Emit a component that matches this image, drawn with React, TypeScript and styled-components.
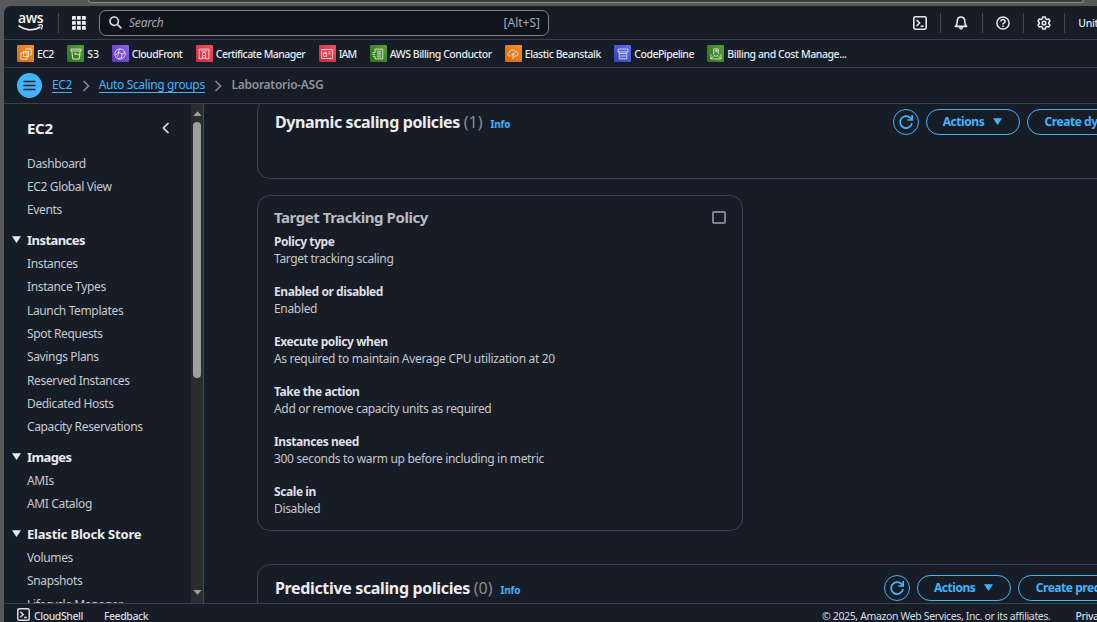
import React from 'react';
import styled, { createGlobalStyle, css } from 'styled-components';

const line = '#39424e';
const bg = '#161d26';
const blue = '#42b4ff';

const Global = createGlobalStyle`
  * { box-sizing: border-box; }
  body { margin: 0; background: #58585b; overflow: hidden; }
  body, button, input { font-family: 'Noto Sans', 'Open Sans', sans-serif; }
  svg { display: block; flex: none; }
`;

const Desktop = styled.div`
  height: 622px;
  display: flex;
  flex-direction: column;
  background: #58585b;
  overflow: hidden;
`;

const BrowserEdge = styled.div`
  height: 6px;
  flex: none;
  padding: 0 13px 0 88px;
`;

const AddressBar = styled.div`
  height: 3px;
  background: #3c3c3f;
  border: 1px solid #8b8b8d;
  border-top: 0;
  border-radius: 0 0 8px 8px;
`;

const Window = styled.div`
  flex: 1;
  min-height: 0;
  margin-left: 4px;
  display: flex;
  flex-direction: column;
  background: ${bg};
  border-top-left-radius: 7px;
  overflow: hidden;
  color: #c6c6cd;
  font-size: 12px;
`;

const TopNav = styled.header`
  height: 34px;
  flex: none;
  display: flex;
  align-items: center;
  padding-left: 13px;
  border-bottom: 1px solid ${line};
`;

const NavDivider = styled.div`
  width: 1px;
  height: 20px;
  background: #424650;
  margin: 0 13px 0 14px;
`;

const SearchBox = styled.label`
  width: 450px;
  height: 26px;
  margin-left: 13px;
  padding: 0 8px 0 9px;
  display: flex;
  align-items: center;
  border: 1.5px solid #7d828c;
  border-radius: 7px;
  background: #0f141a;
  color: #a4a9b3;
`;

const SearchInput = styled.input`
  flex: 1;
  min-width: 0;
  margin-left: 7px;
  padding: 0;
  border: 0;
  outline: 0;
  background: transparent;
  font-size: 12px;
  font-style: italic;
  letter-spacing: -0.2px;
  &::placeholder { color: #a4a9b3; opacity: 1; }
`;

const Shortcut = styled.span`
  font-size: 12px;
  letter-spacing: 0;
`;

const NavTools = styled.div`
  margin-left: auto;
  width: 197px;
  display: flex;
  align-items: center;
  color: #e6e8ec;
  overflow: hidden;
`;

const NavTool = styled.div`
  width: 41.3px;
  height: 20px;
  flex: none;
  display: flex;
  align-items: center;
  justify-content: center;
  border-right: 1px solid #424650;
`;

const Region = styled.span`
  margin-left: 13px;
  font-size: 10.5px;
  font-weight: 500;
  white-space: nowrap;
  letter-spacing: -0.3px;
`;

const Favorites = styled.nav`
  height: 28px;
  flex: none;
  display: flex;
  align-items: center;
  gap: 13px;
  padding-left: 13px;
  border-bottom: 1px solid ${line};
`;

const Favorite = styled.a`
  display: flex;
  align-items: center;
  gap: 3px;
  color: #e8eaee;
`;

const FavoriteName = styled.span<{ $width: number; $track: number }>`
  width: ${p => p.$width}px;
  letter-spacing: ${p => p.$track}px;
  font-size: 10.5px;
  font-weight: 500;
  line-height: 16px;
  white-space: nowrap;
`;

const ServiceTile = styled.span<{ $color: string }>`
  width: 17px;
  height: 17px;
  display: flex;
  align-items: center;
  justify-content: center;
  border-radius: 1px;
  background: ${p => p.$color};
  color: #fff;
`;

const Crumbs = styled.nav`
  height: 36px;
  flex: none;
  display: flex;
  align-items: center;
  padding-left: 13px;
  border-bottom: 1px solid ${line};
  color: #7f8692;
`;

const MenuButton = styled.button`
  width: 25px;
  height: 25px;
  margin-right: 10px;
  padding: 0;
  display: flex;
  align-items: center;
  justify-content: center;
  border: 0;
  border-radius: 50%;
  background: ${blue};
  color: #161d26;
`;

const CrumbLink = styled.a`
  color: ${blue};
  line-height: 14px;
  margin-bottom: 1px;
  border-bottom: 1px solid ${blue};
  letter-spacing: -0.36px;
  white-space: nowrap;
`;

const CrumbCurrent = styled.span`
  color: #8c939f;
  font-weight: 600;
  line-height: 16px;
  margin-bottom: 2px;
  letter-spacing: -0.27px;
`;

const CrumbArrow = styled.svg`
  margin: 0 9px 0 9.7px;
`;

const Body = styled.div`
  flex: 1;
  min-height: 0;
  display: flex;
`;

const Sidebar = styled.aside`
  width: 187px;
  flex: none;
  overflow: hidden;
`;

const SidebarTitle = styled.div`
  height: 47.5px;
  padding: 0 21px 0 23px;
  display: flex;
  align-items: center;
  justify-content: space-between;
  color: #f3f3f7;
  font-size: 15px;
  font-weight: 700;
  letter-spacing: -0.3px;
`;

const NavGroup = styled.div`
  padding-bottom: 6.5px;
`;

const NavItem = styled.a`
  display: block;
  height: 23.35px;
  line-height: 23.35px;
  padding-left: 23px;
  color: #c6c9d0;
  letter-spacing: -0.36px;
  white-space: nowrap;
`;

const NavHeading = styled.div<{ $track: number }>`
  height: 23.8px;
  display: flex;
  align-items: center;
  gap: 6px;
  padding-left: 8px;
  color: #e9ebf0;
  font-size: 13px;
  font-weight: 700;
  letter-spacing: ${p => p.$track}px;
`;

const Scrollbar = styled.div`
  width: 13px;
  flex: none;
  display: flex;
  flex-direction: column;
  align-items: center;
  padding: 7px 0 8px;
  background: #2c2c2c;
  border-right: 1px solid #45484d;
  color: #9f9f9f;
`;

const Thumb = styled.div`
  width: 8px;
  height: 256px;
  margin-top: 6px;
  margin-bottom: auto;
  border-radius: 4px;
  background: #9f9f9f;
`;

const Main = styled.main`
  flex: 1;
  min-width: 0;
  padding-left: 53px;
  overflow: hidden;
`;

const Section = styled.section<{ $scrolled?: boolean }>`
  width: 960px;
  height: 81px;
  padding: 10px 0 0 17px;
  border: 1px solid ${line};
  border-radius: 13px;
  ${p => p.$scrolled && css`margin-top: -6px;`}
`;

const SectionHeader = styled.div`
  width: 822px;
  height: 26px;
  display: flex;
  align-items: center;
  overflow: hidden;
`;

const SectionTitle = styled.h2<{ $track: number }>`
  margin: 0 0 1px;
  color: #ebebf0;
  font-size: 16px;
  font-weight: 700;
  line-height: 24px;
  letter-spacing: ${p => p.$track}px;
  white-space: nowrap;
`;

const Count = styled.span`
  color: #8c8c94;
  font-weight: 400;
  letter-spacing: 0;
`;

const Info = styled.a`
  margin: 4px 0 0 8px;
  color: ${blue};
  font-size: 10px;
  font-weight: 700;
  letter-spacing: -0.2px;
`;

const ButtonRow = styled.div<{ $width: number }>`
  width: ${p => p.$width}px;
  margin-left: auto;
  display: flex;
  gap: 7px;
`;

const OutlineButton = styled.button<{ $round?: boolean }>`
  flex: none;
  width: ${p => (p.$round ? 26 : 94)}px;
  height: 26px;
  padding: 0 0 1px;
  display: flex;
  align-items: center;
  justify-content: center;
  gap: 9px;
  border: 1.5px solid ${blue};
  border-radius: 13px;
  background: transparent;
  color: ${blue};
  font-size: 12px;
  font-weight: 700;
  letter-spacing: -0.45px;
  white-space: nowrap;
`;

const CreateButton = styled(OutlineButton)`
  width: 210px;
  justify-content: flex-start;
  padding-left: 17px;
`;

const PolicyCard = styled.article`
  width: 486px;
  height: 336px;
  margin: 16px 0 33px;
  padding: 11px 16px 0;
  border: 1px solid ${line};
  border-radius: 13px;
`;

const PolicyHeader = styled.div`
  height: 20px;
  display: flex;
  align-items: center;
  justify-content: space-between;
`;

const PolicyName = styled.h3`
  margin: 0;
  color: #b9bbc2;
  font-size: 15px;
  font-weight: 700;
  letter-spacing: -0.45px;
`;

const Checkbox = styled.span`
  width: 14px;
  height: 13px;
  border: 2px solid #7d838e;
  border-radius: 2px;
`;

const Field = styled.dl`
  margin: 0;
  padding-top: 6px;
  height: 50px;
  line-height: 17px;
`;

const Term = styled.dt`
  color: #dedfe6;
  font-weight: 700;
  letter-spacing: -0.42px;
`;

const Value = styled.dd`
  margin: 0;
  letter-spacing: -0.33px;
`;

const Footer = styled.footer`
  height: 19px;
  flex: none;
  display: flex;
  padding: 4px 0 0 13px;
  border-top: 1px solid ${line};
  color: #dadce2;
  font-size: 10.5px;
  font-weight: 500;
  line-height: 16px;
  letter-spacing: -0.42px;
  white-space: nowrap;
  overflow: hidden;
`;

const FooterLink = styled.a<{ $indent: number }>`
  margin-left: ${p => p.$indent}px;
`;

const Copyright = styled.span`
  margin-left: auto;
  width: 253.5px;
  flex: none;
  font-weight: 400;
  letter-spacing: -0.36px;
`;

const Privacy = styled.a`
  width: 21.5px;
  flex: none;
`;

const Caret = () => (
  <svg width="9" height="7" viewBox="0 0 9 7"><path d="M0 .3h9L4.5 7z" fill="currentColor" /></svg>
);

const Refresh = () => (
  <svg width="16" height="16" viewBox="0 0 16 16" fill="none" stroke="currentColor" strokeWidth="1.7">
    <path d="M14 9.2A6 6 0 1 1 12.4 3.9L14 5.6" /><path d="M14.2 1v5H9.4" />
  </svg>
);

const Terminal = ({ size = 14 }: { size?: number }) => (
  <svg width={size} height={size} viewBox="0 0 14 14" fill="none" stroke="currentColor" strokeWidth="1.6">
    <rect x=".8" y=".8" width="12.4" height="12.4" rx="1.6" /><path d="M3.6 4l3 3-3 3M7.6 10.2h3" />
  </svg>
);

const AwsMark = styled.span`
  width: 27px;
  height: 18px;
  flex: none;
  display: flex;
  flex-direction: column;
  align-items: center;
  color: #f4f5f7;
`;

const AwsName = styled.span`
  height: 10px;
  font-family: 'Open Sans', sans-serif;
  font-size: 14px;
  font-weight: 600;
  line-height: 8px;
  letter-spacing: -0.4px;
`;

const tiles = {
  orange: 'linear-gradient(45deg, #d06a12, #f4922a)',
  green: 'linear-gradient(45deg, #2a701f, #57a035)',
  purple: 'linear-gradient(45deg, #5a36b8, #9160ea)',
  red: 'linear-gradient(45deg, #c8293c, #f0515c)',
  indigo: 'linear-gradient(45deg, #3541b8, #5c6ff0)',
};

const favorites = [
  { name: 'EC2', width: 17.3, track: -0.6, color: tiles.orange, art: <><rect x="1" y="5.2" width="6.6" height="6.8" /><rect x="3.8" y="3.8" width="5.6" height="5.4" /><path d="M6 2V1h6.2v6.4H10.8" /></> },
  { name: 'S3', width: 11.5, track: -0.1, color: tiles.green, art: <><path d="M1 1.2h11v2H1zM2 3.4l1 8.6h7l1-8.6M5.8 6.2l5.6 1.6" /><circle cx="5.6" cy="6.3" r=".5" /></> },
  { name: 'CloudFront', width: 51, track: -0.53, color: tiles.purple, art: <><circle cx="6.5" cy="6.5" r="5.6" /><path d="M1.4 7.5L5 4.6l3.6 1.8M5 4.6L5.6 1M8.6 6.4L11.8 5M4.5 11.6l4-1.4V6.4M5 4.6l-1 5" /></> },
  { name: 'Certificate Manager', width: 90, track: -0.55, color: tiles.red, art: <><path d="M3.4 11.8H1.2V1.2h10.6v10.6H9.6M3 3.2h7" /><circle cx="6.5" cy="6.6" r="1.9" /><path d="M5.2 8.2L4 11.8l2.5-1 2.5 1-1.2-3.6" /></> },
  { name: 'IAM', width: 18, track: -0.9, color: tiles.red, art: <><rect x=".8" y="1.8" width="11.4" height="9.4" /><path d="M2.8 6h3.4v3H2.8zM3.4 6V4.6h2.2V6M8 4.4h2.4M8 6.4h2" /></> },
  { name: 'AWS Billing Conductor', width: 102, track: -0.46, color: tiles.green, art: <><path d="M3.4 5V1.2h8.2v10.6H3.4V9M5.4 3.6h4.4M5.4 5.6h4.4M5.4 7.6h4.4M5.4 9.6h4.4M.6 5h2.6M.6 7h2.6M1.2 9h2" /></> },
  { name: 'Elastic Beanstalk', width: 76.5, track: -0.46, color: tiles.orange, art: <><path d="M4.4 8.6H2.6C.4 8.2.5 5.2 2.6 5c0-3.4 5.2-4 6.2-1 3.4-.4 4 4 1.4 4.6H8.6M6.5 12V5M6.5 8.4L4.6 6.6M6.5 7.4L8.6 5.6M6.5 10.6l2-1.8" /></> },
  { name: 'CodePipeline', width: 60, track: -0.5, color: tiles.indigo, art: <><path d="M1.2 1.2h10.6v3H1.2zM2.4 4.4v7.4h8.2V4.4M3 6h7M5 7.6L3.9 8.8 5 10M8 7.6l1.1 1.2L8 10M6.9 7.4L6.1 10.2" /></> },
  { name: 'Billing and Cost Manage...', width: 121, track: -0.42, color: tiles.green, art: <><path d="M4 7V1h5v6M5.4 4.8l2-2M5.8 2.6h1.8v1.8M1 6.6v5.2h11V6.6M1 11.6l3.4-3.4L6.5 9l2.1-.8 3.4 3.4" /></> },
];

const groups: { heading?: string; track?: number; items: string[] }[] = [
  { items: ['Dashboard', 'EC2 Global View', 'Events'] },
  { heading: 'Instances', track: -0.55, items: ['Instances', 'Instance Types', 'Launch Templates', 'Spot Requests', 'Savings Plans', 'Reserved Instances', 'Dedicated Hosts', 'Capacity Reservations'] },
  { heading: 'Images', track: -0.6, items: ['AMIs', 'AMI Catalog'] },
  { heading: 'Elastic Block Store', track: -0.2, items: ['Volumes', 'Snapshots', 'Lifecycle Manager'] },
];

const fields = [
  ['Policy type', 'Target tracking scaling'],
  ['Enabled or disabled', 'Enabled'],
  ['Execute policy when', 'As required to maintain Average CPU utilization at 20'],
  ['Take the action', 'Add or remove capacity units as required'],
  ['Instances need', '300 seconds to warm up before including in metric'],
  ['Scale in', 'Disabled'],
];

const Arrow = () => (
  <CrumbArrow width="8" height="12" viewBox="0 0 8 12" fill="none" stroke="currentColor" strokeWidth="1.7"><path d="M1.5 1l5 5-5 5" /></CrumbArrow>
);

function PolicySection({ title, count, create, track, actionsWidth, scrolled }: {
  title: string; count: number; create: string; track: number; actionsWidth: number; scrolled?: boolean;
}) {
  return (
    <Section $scrolled={scrolled}>
      <SectionHeader>
        <SectionTitle $track={track}>{title} <Count>({count})</Count></SectionTitle>
        <Info>Info</Info>
        <ButtonRow $width={actionsWidth}>
          <OutlineButton $round aria-label="Refresh"><Refresh /></OutlineButton>
          <OutlineButton>Actions <Caret /></OutlineButton>
          <CreateButton>{create}</CreateButton>
        </ButtonRow>
      </SectionHeader>
    </Section>
  );
}

export default function App() {
  return (
    <Desktop>
      <Global />
      <BrowserEdge><AddressBar /></BrowserEdge>
      <Window>
        <TopNav>
          <AwsMark>
            <AwsName>aws</AwsName>
            <svg width="27" height="8" viewBox="0 0 27 8" fill="none" stroke="currentColor">
              <path d="M1.5 1.6c7 5.2 16 5.2 22 1.4" strokeWidth="1.6" /><path d="M21 1.2c2-.6 3.8-.6 4.3 0 .3.9-.3 2.8-1.4 4.3" strokeWidth="1.2" />
            </svg>
          </AwsMark>
          <NavDivider />
          <svg width="14" height="14" viewBox="0 0 14 14" fill="#eceef2">
            {[0, 5, 10].map(y => [0, 5, 10].map(x => <rect key={`${x}-${y}`} x={x} y={y} width="3.8" height="3.8" rx=".4" />))}
          </svg>
          <SearchBox>
            <svg width="13" height="13" viewBox="0 0 13 13" fill="none" stroke="#d5d8de" strokeWidth="1.7"><circle cx="5.2" cy="5.2" r="4.2" /><path d="M8.3 8.3l4.1 4.1" /></svg>
            <SearchInput placeholder="Search" />
            <Shortcut>[Alt+S]</Shortcut>
          </SearchBox>
          <NavTools>
            <NavTool><Terminal /></NavTool>
            <NavTool>
              <svg width="14" height="14" viewBox="0 0 14 14" fill="none" stroke="currentColor" strokeWidth="1.6" strokeLinejoin="round"><path d="M1.4 10.4c1.6-1.4 1.8-2.8 1.8-5C3.3 2.8 4.9 1 7 1s3.7 1.8 3.8 4.4c0 2.2.2 3.6 1.8 5z" /><path d="M5 11.4c.3 2.4 3.7 2.4 4 0z" fill="currentColor" strokeWidth=".6" /></svg>
            </NavTool>
            <NavTool>
              <svg width="14" height="14" viewBox="0 0 14 14" fill="none" stroke="currentColor" strokeWidth="1.5"><circle cx="7" cy="7" r="6.1" /><path d="M4.9 5.6c0-2.7 4.2-2.6 4.2-.2C9.1 7 7 6.9 7 8.5M7 9.5v1.5" /></svg>
            </NavTool>
            <NavTool>
              <svg width="14" height="14" viewBox="0 0 14 14" fill="none" stroke="currentColor" strokeWidth="1.5" strokeLinejoin="round"><path d="M5.7 1h2.6l.4 1.8 1.3.7 1.7-.6L13 5.100l-1.300 1.300v1.200L13 8.900l-1.300 2.200-1.700-.6-1.300.7L8.300 13H5.700l-.4-1.800-1.300-.7-1.700.6L1 8.900l1.300-1.300V6.400L1 5.100l1.300-2.200 1.700.6 1.300-.7z" /><circle cx="7" cy="7" r="1.8" /></svg>
            </NavTool>
            <Region>United States</Region>
          </NavTools>
        </TopNav>
        <Favorites>
          {favorites.map(f => (
            <Favorite key={f.name}>
              <ServiceTile $color={f.color}><svg width="12" height="12" viewBox="0 0 13 13" fill="none" stroke="currentColor" strokeWidth=".8">{f.art}</svg></ServiceTile>
              <FavoriteName $width={f.width} $track={f.track}>{f.name}</FavoriteName>
            </Favorite>
          ))}
        </Favorites>
        <Crumbs>
          <MenuButton aria-label="Menu"><svg width="13" height="11" viewBox="0 0 13 11" stroke="currentColor" strokeWidth="1.6"><path d="M.5 1.5h12M.5 5.5h12M.5 9.5h12" /></svg></MenuButton>
          <CrumbLink>EC2</CrumbLink><Arrow />
          <CrumbLink>Auto Scaling groups</CrumbLink><Arrow />
          <CrumbCurrent>Laboratorio-ASG</CrumbCurrent>
        </Crumbs>
        <Body>
          <Sidebar>
            <SidebarTitle>EC2<svg width="8" height="12" viewBox="0 0 8 12" fill="none" stroke="#dfe2e8" strokeWidth="1.7"><path d="M6.5 1l-5 5 5 5" /></svg></SidebarTitle>
            {groups.map((g, i) => (
              <NavGroup key={i}>
                {g.heading && <NavHeading $track={g.track ?? 0}><Caret />{g.heading}</NavHeading>}
                {g.items.map(t => <NavItem key={t}>{t}</NavItem>)}
              </NavGroup>
            ))}
          </Sidebar>
          <Scrollbar>
            <svg width="9" height="5" viewBox="0 0 9 5"><path d="M.3 5L4.5.3 8.7 5z" fill="currentColor" /></svg>
            <Thumb />
            <svg width="9" height="5" viewBox="0 0 9 5"><path d="M.3 0L4.5 4.7 8.7 0z" fill="currentColor" /></svg>
          </Scrollbar>
          <Main>
            <PolicySection scrolled title="Dynamic scaling policies" count={1} create="Create dynamic scaling policy" track={-0.38} actionsWidth={204.5} />
            <PolicyCard>
              <PolicyHeader><PolicyName>Target Tracking Policy</PolicyName><Checkbox /></PolicyHeader>
              {fields.map(([k, v]) => <Field key={k}><Term>{k}</Term><Value>{v}</Value></Field>)}
            </PolicyCard>
            <PolicySection title="Predictive scaling policies" count={0} create="Create predictive scaling policy" track={-0.35} actionsWidth={213.3} />
          </Main>
        </Body>
        <Footer>
          <Terminal size={13} />
          <FooterLink $indent={4}>CloudShell</FooterLink>
          <FooterLink $indent={21}>Feedback</FooterLink>
          <Copyright>© 2025, Amazon Web Services, Inc. or its affiliates.</Copyright>
          <Privacy>Privacy</Privacy>
        </Footer>
      </Window>
    </Desktop>
  );
}
